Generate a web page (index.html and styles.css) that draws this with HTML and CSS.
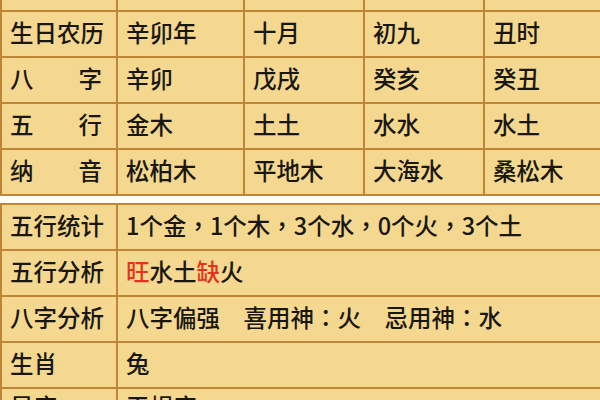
FILE: index.html
```html
<!DOCTYPE html>
<html lang="zh-CN">
<head>
<meta charset="utf-8">
<title>八字</title>
<link rel="stylesheet" href="styles.css">
</head>
<body>
<div class="page">
  <div class="grid grid-five top">
    <div class="cell"></div><div class="cell"></div><div class="cell"></div><div class="cell"></div><div class="cell"></div>

    <div class="cell label">生日农历</div>
    <div class="cell">辛卯年</div>
    <div class="cell">十月</div>
    <div class="cell">初九</div>
    <div class="cell">丑时</div>

    <div class="cell label spread"><span>八</span><span>字</span></div>
    <div class="cell">辛卯</div>
    <div class="cell">戊戌</div>
    <div class="cell">癸亥</div>
    <div class="cell">癸丑</div>

    <div class="cell label spread"><span>五</span><span>行</span></div>
    <div class="cell">金木</div>
    <div class="cell">土土</div>
    <div class="cell">水水</div>
    <div class="cell">水土</div>

    <div class="cell label spread"><span>纳</span><span>音</span></div>
    <div class="cell">松柏木</div>
    <div class="cell">平地木</div>
    <div class="cell">大海水</div>
    <div class="cell">桑松木</div>
  </div>

  <div class="grid grid-two">
    <div class="cell label">五行统计</div>
    <div class="cell">1个金<span class="p">，</span>1个木<span class="p">，</span>3个水<span class="p">，</span>0个火<span class="p">，</span>3个土</div>

    <div class="cell label">五行分析</div>
    <div class="cell"><span class="red">旺</span>水土<span class="red">缺</span>火</div>

    <div class="cell label">八字分析</div>
    <div class="cell">八字偏强　喜用神<span class="p">：</span>火　忌用神<span class="p">：</span>水</div>

    <div class="cell label">生肖</div>
    <div class="cell">兔</div>

    <div class="cell label last">星座</div>
    <div class="cell last">天蝎座</div>
  </div>
</div>
</body>
</html>
```

FILE: styles.css
```css
html, body {
  margin: 0;
  padding: 0;
  background: #ffffff;
  overflow: hidden;
}

body {
  width: 600px;
  height: 400px;
  font-family: "Noto Sans CJK SC", "Noto Sans", sans-serif;
  font-size: 23.5px;
  font-weight: 500;
  color: #1a1712;
}

.page {
  width: 604px;
}

.grid {
  display: grid;
  gap: 2px;
  padding: 2px;
  background: #c08638;
  grid-auto-rows: 44px;
}

.top {
  margin-top: -36px;
}

.grid-five {
  grid-template-columns: 114px 125px 118px 118px 1fr;
}

.grid-two {
  margin-top: 7px;
  grid-template-columns: 114px 1fr;
}

.cell {
  background: #f4d890;
  display: flex;
  align-items: center;
  padding: 0 8px 2px;
  white-space: nowrap;
  line-height: 1;
}

.label {
  padding-right: 14px;
}

.spread {
  justify-content: space-between;
}

.p {
  font-family: "Noto Sans CJK TC", sans-serif;
}

.red {
  color: #e2341c;
}

.last {
  align-items: flex-start;
  padding-top: 6px;
}
```
